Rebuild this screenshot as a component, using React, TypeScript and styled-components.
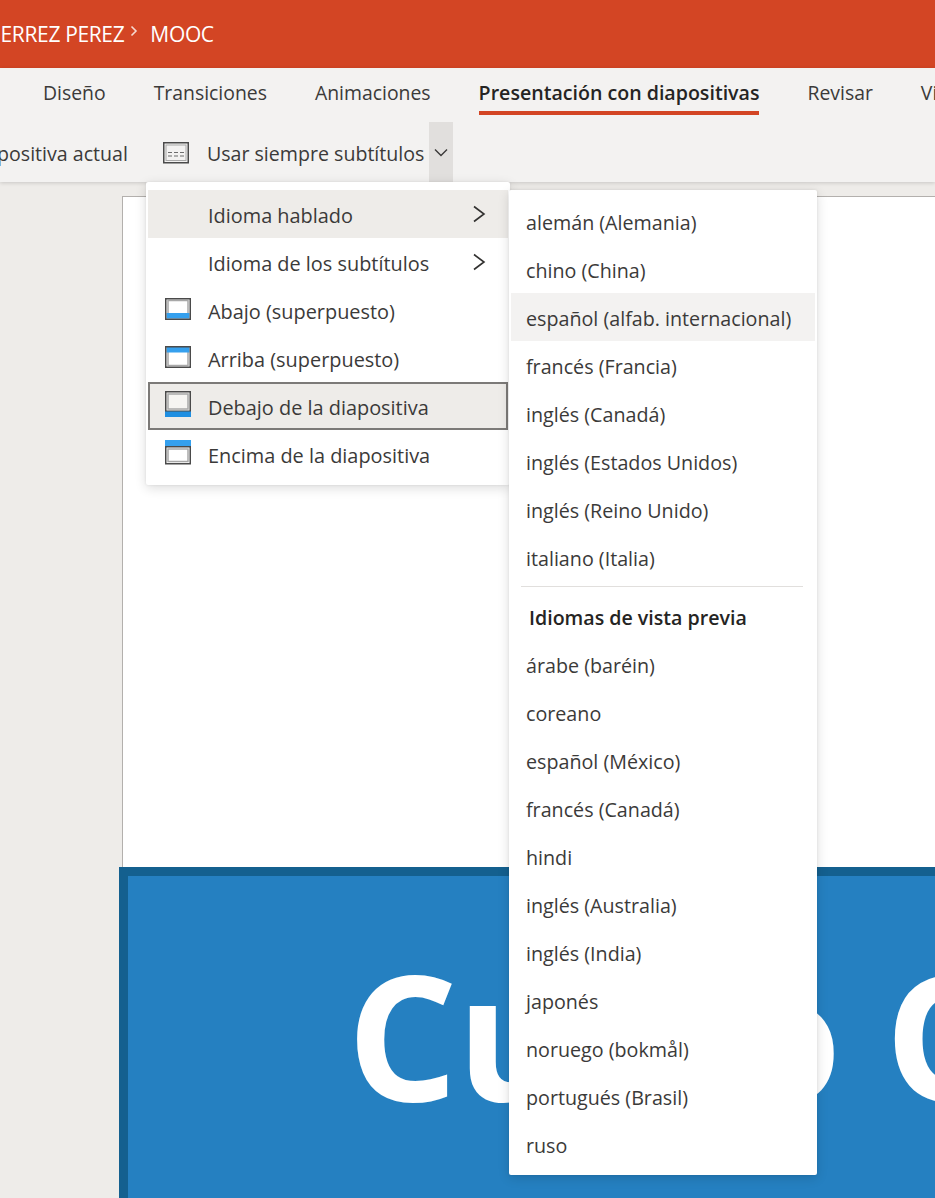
import React from "react";
import styled, { createGlobalStyle } from "styled-components";

const Global = createGlobalStyle`
  html, body { margin: 0; padding: 0; background: #eeece9; }
  * { box-sizing: border-box; }
`;

const FONT = `"Open Sans", "Noto Sans", "Liberation Sans", sans-serif`;

const Page = styled.div`
  position: relative;
  width: 935px;
  height: 1198px;
  overflow: hidden;
  background: #eeece9;
  font-family: ${FONT};
  color: #323130;
`;

const TitleBar = styled.header`
  height: 68px;
  background: #d34524;
  color: #fff;
  display: flex;
  align-items: center;
  font-size: 21px;
  padding-bottom: 1px;
  white-space: nowrap;
`;

const Crumb = styled.span<{ $lead?: boolean }>`
  letter-spacing: -0.35px;
  margin-left: ${(p) => (p.$lead ? "-5px" : "0")};
`;

const CrumbSep = styled.svg`
  width: 10px;
  height: 12px;
  margin: -6px 11px 0 5px;
`;

const Ribbon = styled.div`
  background: #f3f2f1;
  height: 114px;
  box-shadow: 0 1px 4px rgba(0, 0, 0, 0.16);
  position: relative;
`;

const Tabs = styled.nav`
  height: 54px;
  display: flex;
  align-items: flex-start;
  padding-left: 43px;
  gap: 48px;
  white-space: nowrap;
  font-size: 19.4px;
`;

const Tab = styled.div<{ $active?: boolean }>`
  height: 47px;
  padding-top: 11px;
  line-height: 27px;
  font-weight: ${(p) => (p.$active ? 600 : 400)};
  font-size: ${(p) => (p.$active ? "19.6px" : "19.4px")};
  color: ${(p) => (p.$active ? "#252423" : "#3b3a39")};
  border-bottom: 4px solid ${(p) => (p.$active ? "#d34524" : "transparent")};
`;

const Toolbar = styled.div`
  height: 60px;
  display: flex;
  align-items: stretch;
  white-space: nowrap;
  font-size: 19.6px;
  color: #3b3a39;
`;

const ToolLabel = styled.span<{ $offset?: number }>`
  display: flex;
  align-items: center;
  line-height: 1;
  padding-top: 3px;
  margin-left: ${(p) => p.$offset ?? 0}px;
`;

const ToolIcon = styled.svg`
  width: 28px;
  height: 24px;
  align-self: center;
  margin: 0 17px 0 34px;
`;

const Chevron = styled.div`
  width: 24px;
  margin-left: 5px;
  background: #e1dfdd;
  display: flex;
  align-items: center;
  justify-content: center;
`;

const Stage = styled.main`
  position: relative;
  height: 1016px;
  padding: 14px 0 0 122px;
  overflow: hidden;
`;

const Slide = styled.section`
  width: 900px;
  height: 1100px;
  background: #fff;
  border: 1px solid #b3b0ad;
  border-right: 0;
  border-bottom: 0;
  padding-top: 670px;
`;

const Banner = styled.div`
  margin-left: -4px;
  height: 400px;
  background: #2580c1;
  border: 9px solid #14608f;
  border-right: 0;
  border-bottom: 0;
  color: #fff;
  font-weight: 700;
  font-size: 174px;
  line-height: 1;
  white-space: nowrap;
  padding: 71px 0 0 219px;
`;

const BannerTitle = styled.div`
  letter-spacing: -1px;
`;

const Menu = styled.div`
  position: absolute;
  background: #fff;
  border-radius: 2px;
  box-shadow: 0 3px 12px rgba(0, 0, 0, 0.14), 0 0 3px rgba(0, 0, 0, 0.08);
`;

const MainMenu = styled(Menu)`
  left: 146px;
  top: 182px;
  width: 364px;
  height: 303px;
  padding: 8px 2px 0;
`;

const LangMenu = styled(Menu)`
  left: 509px;
  top: 190px;
  width: 308px;
  height: 985px;
  padding: 7px 2px 0;
`;

const MenuRow = styled.div<{ $hover?: boolean; $focus?: boolean }>`
  height: 48px;
  display: flex;
  align-items: center;
  padding-top: 2px;
  font-size: 19.9px;
  color: #3b3a39;
  white-space: nowrap;
  position: relative;
  background: ${(p) => (p.$hover || p.$focus ? "#eeece9" : "transparent")};
  outline: ${(p) => (p.$focus ? "2px solid #7c7a78" : "none")};
  outline-offset: -2px;
`;

const IconSlot = styled.div`
  width: 60px;
  height: 30px;
  flex: none;
  margin-top: -2px;
  padding-left: 15px;
`;

const Arrow = styled.svg`
  position: absolute;
  right: 20px;
  top: 14px;
  width: 18px;
  height: 20px;
`;

const LangRow = styled.div<{ $hover?: boolean }>`
  height: 48px;
  display: flex;
  align-items: center;
  padding: 2px 0 0 15px;
  font-size: 19.7px;
  color: #3b3a39;
  white-space: nowrap;
  background: ${(p) => (p.$hover ? "#f3f2f1" : "transparent")};
`;

const Divider = styled.div`
  height: 1px;
  margin: 5px 12px 0 10px;
  background: #e1dfdd;
`;

const GroupTitle = styled.div`
  height: 53px;
  padding: 8px 0 0 18px;
  display: flex;
  align-items: center;
  font-size: 19.6px;
  font-weight: 600;
  color: #252423;
  white-space: nowrap;
`;

const ICON_DARK = "#4a4a4a";
const ICON_GREY = "#a8a8a8";
const BAND = "#35a0ee";

function LayoutIcon({ kind }: { kind: "over-bottom" | "over-top" | "below" | "above" }) {
  const common = { width: 30, height: 30, viewBox: "0 0 30 30", fill: "none" } as const;
  if (kind === "over-bottom")
    return (
      <svg {...common}>
        <rect x="5" y="5.5" width="20" height="17" stroke={ICON_GREY} strokeWidth="1.5" />
        <rect x="3.5" y="18" width="23" height="5.5" fill={BAND} />
        <rect x="2.75" y="3.75" width="24.5" height="20.5" stroke={ICON_DARK} strokeWidth="1.5" />
      </svg>
    );
  if (kind === "over-top")
    return (
      <svg {...common}>
        <rect x="5" y="5.5" width="20" height="17" stroke={ICON_GREY} strokeWidth="1.5" />
        <rect x="3.5" y="4" width="23" height="5.5" fill={BAND} />
        <rect x="2.75" y="3.75" width="24.5" height="20.5" stroke={ICON_DARK} strokeWidth="1.5" />
      </svg>
    );
  if (kind === "below")
    return (
      <svg {...common}>
        <rect x="2.75" y="0.75" width="24.5" height="19.5" fill="#f6f5f2" stroke={ICON_DARK} strokeWidth="1.5" />
        <rect x="5" y="3" width="20" height="15" stroke={ICON_GREY} strokeWidth="1.5" />
        <rect x="2" y="20.5" width="26" height="5.5" fill="#1f8fe2" />
      </svg>
    );
  return (
    <svg {...common}>
      <rect x="2" y="1" width="26" height="6" fill={BAND} />
      <rect x="2.75" y="7.75" width="24.5" height="17" stroke={ICON_DARK} strokeWidth="1.5" />
      <rect x="5" y="10" width="20" height="12.5" stroke={ICON_GREY} strokeWidth="1.5" />
    </svg>
  );
}

const primary = [
  "alemán (Alemania)",
  "chino (China)",
  "español (alfab. internacional)",
  "francés (Francia)",
  "inglés (Canadá)",
  "inglés (Estados Unidos)",
  "inglés (Reino Unido)",
  "italiano (Italia)",
];

const preview = [
  "árabe (baréin)",
  "coreano",
  "español (México)",
  "francés (Canadá)",
  "hindi",
  "inglés (Australia)",
  "inglés (India)",
  "japonés",
  "noruego (bokmål)",
  "portugués (Brasil)",
  "ruso",
];

const RightArrow = () => (
  <Arrow viewBox="0 0 18 20" fill="none">
    <path d="M4 2.5 L14 10 L4 17.5" stroke="#323130" strokeWidth="1.6" />
  </Arrow>
);

export default function App() {
  return (
    <Page>
      <Global />
      <TitleBar>
        <Crumb $lead>IERREZ PEREZ</Crumb>
        <CrumbSep viewBox="0 0 10 12" fill="none">
          <path d="M2.5 1.5 L7 6 L2.5 10.5" stroke="#f6d9d0" strokeWidth="1.6" />
        </CrumbSep>
        <Crumb>MOOC</Crumb>
      </TitleBar>
      <Ribbon>
        <Tabs>
          <Tab>Diseño</Tab>
          <Tab>Transiciones</Tab>
          <Tab>Animaciones</Tab>
          <Tab $active>Presentación con diapositivas</Tab>
          <Tab>Revisar</Tab>
          <Tab>Vista</Tab>
        </Tabs>
        <Toolbar>
          <ToolLabel $offset={-33}>Diapositiva actual</ToolLabel>
          <ToolIcon viewBox="0 0 28 24" fill="none">
            <rect x="1.75" y="2.75" width="24.5" height="20" stroke={ICON_DARK} strokeWidth="1.5" />
            <rect x="4" y="5" width="20" height="15.5" stroke={ICON_GREY} strokeWidth="1" />
            <path d="M6 12.5h4M12 12.5h4M18 12.5h4M6 16h4M12 16h4M18 16h4" stroke="#6d6d6d" strokeWidth="1.2" />
          </ToolIcon>
          <ToolLabel>Usar siempre subtítulos</ToolLabel>
          <Chevron>
            <svg width="14" height="9" viewBox="0 0 14 9" fill="none">
              <path d="M1 1.5 L7 7.5 L13 1.5" stroke="#3b3a39" strokeWidth="1.4" />
            </svg>
          </Chevron>
        </Toolbar>
      </Ribbon>
      <Stage>
        <Slide>
          <Banner>
            <BannerTitle>Curso O</BannerTitle>
          </Banner>
        </Slide>
      </Stage>
      <MainMenu>
        <MenuRow $hover>
          <IconSlot />
          Idioma hablado
          <RightArrow />
        </MenuRow>
        <MenuRow>
          <IconSlot />
          Idioma de los subtítulos
          <RightArrow />
        </MenuRow>
        <MenuRow>
          <IconSlot><LayoutIcon kind="over-bottom" /></IconSlot>
          Abajo (superpuesto)
        </MenuRow>
        <MenuRow>
          <IconSlot><LayoutIcon kind="over-top" /></IconSlot>
          Arriba (superpuesto)
        </MenuRow>
        <MenuRow $focus>
          <IconSlot><LayoutIcon kind="below" /></IconSlot>
          Debajo de la diapositiva
        </MenuRow>
        <MenuRow>
          <IconSlot><LayoutIcon kind="above" /></IconSlot>
          Encima de la diapositiva
        </MenuRow>
      </MainMenu>
      <LangMenu>
        {primary.map((l, i) => (
          <LangRow key={l} $hover={i === 2}>{l}</LangRow>
        ))}
        <Divider />
        <GroupTitle>Idiomas de vista previa</GroupTitle>
        {preview.map((l) => (
          <LangRow key={l}>{l}</LangRow>
        ))}
      </LangMenu>
    </Page>
  );
}
